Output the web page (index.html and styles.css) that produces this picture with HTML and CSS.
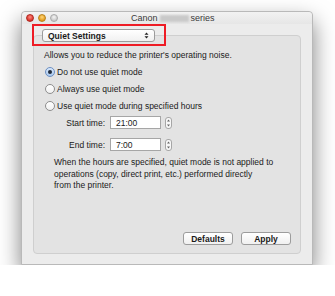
FILE: index.html
```html
<!DOCTYPE html>
<html lang="en">
<head>
  <meta charset="UTF-8" />
  <title>Canon series - Quiet Settings</title>
  <link rel="stylesheet" href="styles.css">
</head>
<body>
  <div class="stage">
    <div class="window">
      <div class="titlebar">
        <div class="lights">
          <span class="light red"></span>
          <span class="light yellow"></span>
          <span class="light gray"></span>
        </div>
        <div class="title">Canon <span class="blur"></span> series</div>
      </div>

      <div class="content">
        <div class="popup">
          <span>Quiet Settings</span>
          <svg class="arrows" width="5" height="7" viewBox="0 0 5 7" aria-hidden="true">
            <path d="M0.5 2.8 L2.5 0.5 L4.5 2.8 Z M0.5 4.2 L2.5 6.5 L4.5 4.2 Z" fill="#222"/>
          </svg>
        </div>
        <div class="highlight"></div>

        <section class="panel">
          <p class="desc">Allows you to reduce the printer's operating noise.</p>

          <ul class="radios">
            <li><span class="radio checked"></span>Do not use quiet mode</li>
            <li><span class="radio"></span>Always use quiet mode</li>
            <li><span class="radio"></span>Use quiet mode during specified hours</li>
          </ul>

          <div class="time-row">
            <span class="time-label">Start time:</span>
            <span class="field">21:00</span>
            <span class="stepper">
              <svg width="5" height="10" viewBox="0 0 5 10" aria-hidden="true">
                <path d="M1 3.5 L2.5 1.5 L4 3.5 Z M1 6.5 L2.5 8.5 L4 6.5 Z" fill="#666"/>
              </svg>
            </span>
          </div>
          <div class="time-row">
            <span class="time-label">End time:</span>
            <span class="field">7:00</span>
            <span class="stepper">
              <svg width="5" height="10" viewBox="0 0 5 10" aria-hidden="true">
                <path d="M1 3.5 L2.5 1.5 L4 3.5 Z M1 6.5 L2.5 8.5 L4 6.5 Z" fill="#666"/>
              </svg>
            </span>
          </div>

          <p class="note">When the hours are specified, quiet mode is not applied to operations (copy, direct print, etc.) performed directly<br>from the printer.</p>

          <div class="actions">
            <button type="button" class="btn">Defaults</button>
            <button type="button" class="btn">Apply</button>
          </div>
        </section>
      </div>
    </div>
  </div>
</body>
</html>
```

FILE: styles.css
```css
:root {
  --window-bg: #ececec;
  --panel-bg: #e3e3e3;
  --panel-border: #cfcfcf;
  --text: #1a1a1a;
  --control-border: #9c9c9c;
  --mark-red: #ee1c25;
  --font: 'Liberation Sans', Arial, sans-serif;
}

* {
  box-sizing: border-box;
}

body {
  margin: 0;
  background: #ffffff;
  font-family: var(--font);
  font-size: 8.5px;
  color: var(--text);
}

.stage {
  padding: 11px 0 0 21px;
}

/* Window */
.window {
  width: 292px;
  height: 254px;
  background: var(--window-bg);
  border: 1px solid #b9b9b9;
  border-radius: 4px 4px 0 0;
  box-shadow: 0 10px 22px rgba(0, 0, 0, 0.5);
}

.titlebar {
  height: 12px;
  display: flex;
  align-items: center;
  padding-left: 4px;
  background: linear-gradient(#f2f2f2, #e6e6e6);
  border-radius: 4px 4px 0 0;
}

.lights {
  display: flex;
  gap: 4px;
}

.light {
  width: 8px;
  height: 8px;
  border-radius: 50%;
}

.light.red {
  background: radial-gradient(circle at 50% 35%, #ff8a7f, #d8322a 70%);
  border: 0.5px solid #b02820;
}

.light.yellow {
  background: radial-gradient(circle at 50% 35%, #ffd77a, #e39a1c 70%);
  border: 0.5px solid #b9811a;
}

.light.gray {
  background: radial-gradient(circle at 50% 35%, #f4f4f4, #c9c9c9 70%);
  border: 0.5px solid #a9a9a9;
}

.title {
  margin-left: 73px;
  font-size: 9px;
  color: #3a3a3a;
  display: flex;
  align-items: center;
  gap: 2px;
}

.blur {
  display: inline-block;
  width: 29px;
  height: 7px;
  background: #c9c9c9;
  filter: blur(1.2px);
}

/* Content */
.content {
  position: relative;
  padding: 5px 11px 0 11px;
}

.popup {
  position: relative;
  z-index: 1;
  width: 113px;
  height: 13px;
  margin-left: 9px;
  margin-bottom: -7px;
  padding: 0 5px;
  display: flex;
  align-items: center;
  justify-content: space-between;
  background: linear-gradient(#ffffff, #f1f1f1);
  border: 1px solid var(--control-border);
  border-radius: 3px;
  font-weight: 700;
}

.highlight {
  position: absolute;
  left: 10px;
  top: 0;
  width: 134px;
  height: 22px;
  border: 2.5px solid var(--mark-red);
  z-index: 2;
}

.panel {
  height: 219px;
  background: var(--panel-bg);
  border: 1px solid var(--panel-border);
  border-radius: 4px;
  padding: 14px 0 0 9px;
  display: flex;
  flex-direction: column;
}

.desc {
  margin: 0 0 7px 1px;
}

.radios {
  list-style: none;
  margin: 0;
  padding: 0 0 0 2px;
  display: flex;
  flex-direction: column;
  gap: 7px;
}

.radios li {
  display: flex;
  align-items: center;
  gap: 2px;
  height: 10px;
}

.radio {
  width: 10px;
  height: 10px;
  border-radius: 50%;
  border: 1px solid #8e8e8e;
  background: linear-gradient(#ffffff, #f0f0f0);
  display: flex;
  align-items: center;
  justify-content: center;
}

.radio.checked {
  border-color: #6c8fc2;
  background: linear-gradient(#d8e8fb, #a9c8ee);
}

.radio.checked::after {
  content: '';
  width: 4px;
  height: 4px;
  border-radius: 50%;
  background: #1f2a3a;
}

.time-row {
  display: flex;
  align-items: center;
  margin-top: 5px;
}

.time-row + .time-row {
  margin-top: 9px;
}

.time-label {
  width: 67px;
  text-align: right;
  padding-right: 5px;
}

.field {
  width: 51px;
  height: 13px;
  background: #ffffff;
  border: 1px solid #a6a6a6;
  padding: 0 5px;
  display: flex;
  align-items: center;
}

.stepper {
  margin-left: 4px;
  width: 7px;
  height: 12px;
  border: 1px solid #a6a6a6;
  border-radius: 3px;
  background: #f7f7f7;
  display: flex;
  align-items: center;
  justify-content: center;
}

.note {
  margin: 6px 0 0 11px;
  line-height: 11.5px;
}

.actions {
  margin-top: auto;
  margin-bottom: 8px;
  padding-right: 9px;
  display: flex;
  justify-content: flex-end;
  gap: 8px;
}

.btn {
  width: 50px;
  height: 13px;
  padding: 0;
  font-family: var(--font);
  font-size: 8.5px;
  font-weight: 700;
  color: var(--text);
  background: linear-gradient(#ffffff, #f0f0f0);
  border: 1px solid var(--control-border);
  border-radius: 3px;
}
```
